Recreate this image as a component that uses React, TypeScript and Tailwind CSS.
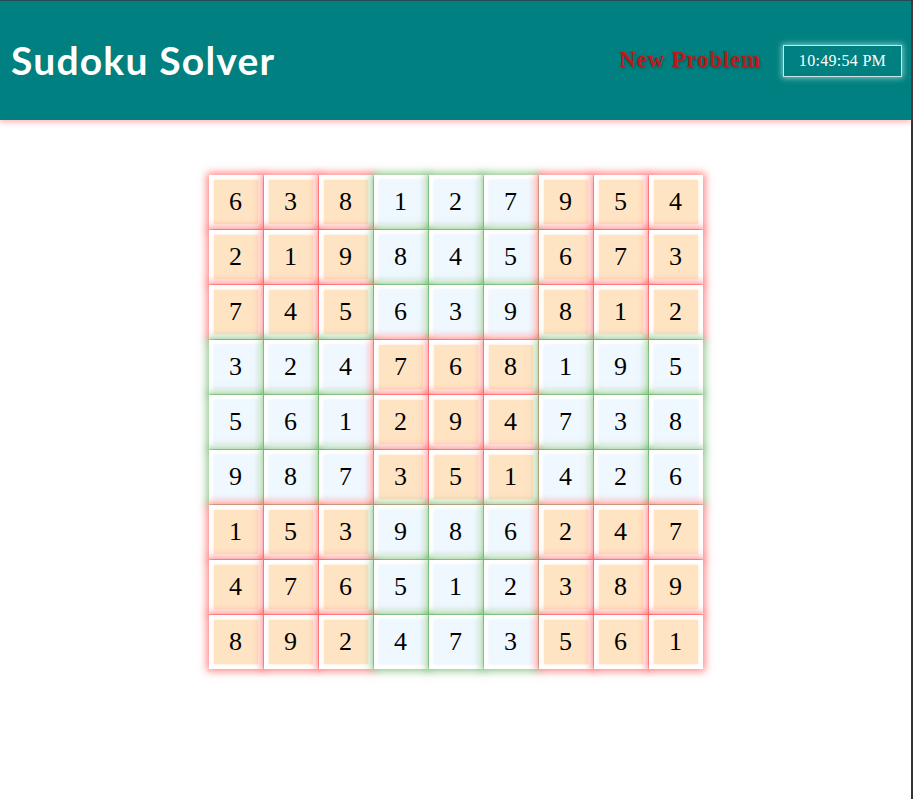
const board = [
  [6, 3, 8, 1, 2, 7, 9, 5, 4],
  [2, 1, 9, 8, 4, 5, 6, 7, 3],
  [7, 4, 5, 6, 3, 9, 8, 1, 2],
  [3, 2, 4, 7, 6, 8, 1, 9, 5],
  [5, 6, 1, 2, 9, 4, 7, 3, 8],
  [9, 8, 7, 3, 5, 1, 4, 2, 6],
  [1, 5, 3, 9, 8, 6, 2, 4, 7],
  [4, 7, 6, 5, 1, 2, 3, 8, 9],
  [8, 9, 2, 4, 7, 3, 5, 6, 1],
];

const Cell = ({ value, warm }: { value: number; warm: boolean }) => {
  return (
    <div
      className={
        warm
          ? 'bg-white p-[5px] shadow-[0_0_8px_2px_rgba(255,40,40,0.6)]'
          : 'bg-white p-[5px] shadow-[0_0_8px_2px_rgba(40,150,40,0.55)]'
      }
    >
      <div
        className={
          warm
            ? 'flex h-[44px] w-[44px] items-center justify-center bg-[#ffe4c4] shadow-[0_0_3px_#ffe4c4]'
            : 'flex h-[44px] w-[44px] items-center justify-center bg-[#f0f8ff] shadow-[0_0_3px_#e4f0fb]'
        }
      >
        <span className="text-[26px] leading-none text-black">{value}</span>
      </div>
    </div>
  );
};

export default function App() {
  return (
    <div className="min-h-[799px] border-r-2 border-[#333] bg-white font-['Liberation_Serif',serif]">
      <header className="flex h-[120px] items-center justify-between border-t border-[#234b55] bg-[#008080] pl-[11px] pr-[9px] shadow-[0_2px_6px_rgba(255,80,80,0.45)]">
        <h1 className="font-['Lato',sans-serif] text-[39px] font-bold tracking-[1.2px] text-white">
          Sudoku Solver
        </h1>
        <div className="flex items-center gap-[22px]">
          <button className="font-['Liberation_Serif',serif] text-[23px] font-bold tracking-[0.8px] text-[#b81c1c] [text-shadow:1px_1px_3px_rgba(0,0,0,0.35)]">
            New Problem
          </button>
          <div className="flex h-[32px] w-[119px] items-center justify-center border border-[#cfe3e3] text-[16px] tracking-[0.3px] text-white shadow-[0_0_6px_1px_rgba(220,255,255,0.6)]">
            10:49:54 PM
          </div>
        </div>
      </header>
      <main className="flex justify-center pt-[55px]">
        <div className="grid grid-cols-9 gap-[1px]">
          {board.map((row, r) =>
            row.map((v, c) => (
              <Cell
                key={`${r}-${c}`}
                value={v}
                warm={(Math.floor(r / 3) + Math.floor(c / 3)) % 2 === 0}
              />
            )),
          )}
        </div>
      </main>
    </div>
  );
}
